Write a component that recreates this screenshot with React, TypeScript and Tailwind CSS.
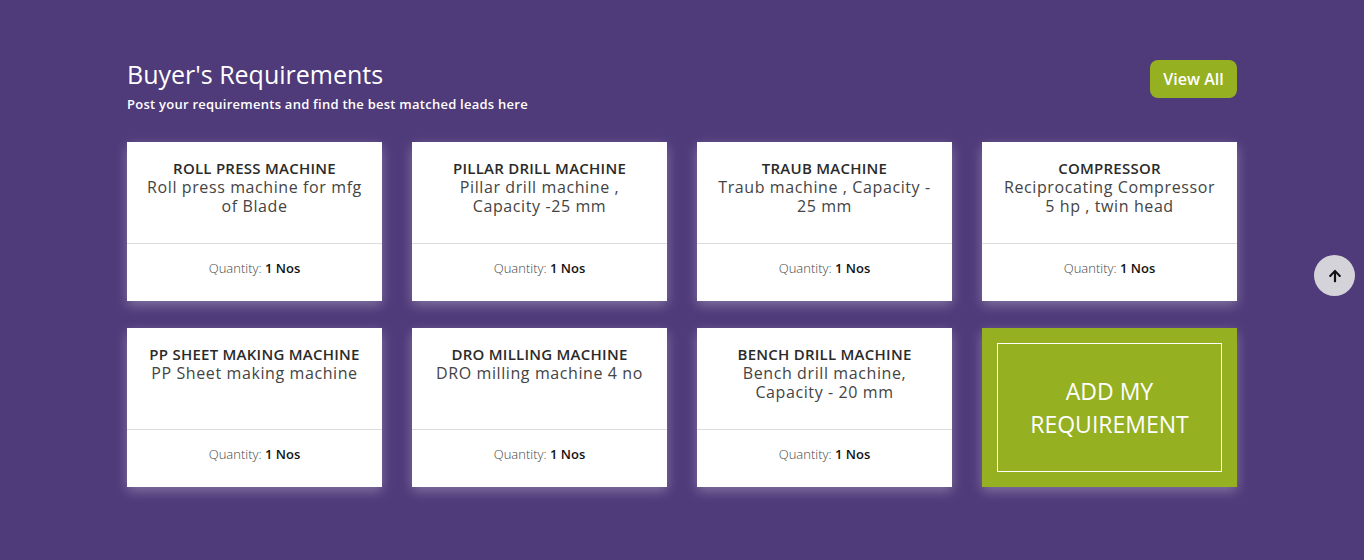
import React from 'react';
import { FaArrowUp } from 'react-icons/fa';

// Buyer's requirements listed on the home page
const requirements = [
  { id: 1, title: 'ROLL PRESS MACHINE', desc: 'Roll press machine for mfg of Blade', qty: '1 Nos' },
  { id: 2, title: 'PILLAR DRILL MACHINE', desc: 'Pillar drill machine , Capacity -25 mm', qty: '1 Nos' },
  { id: 3, title: 'TRAUB MACHINE', desc: 'Traub machine , Capacity - 25 mm', qty: '1 Nos' },
  { id: 4, title: 'COMPRESSOR', desc: 'Reciprocating Compressor 5 hp , twin head', qty: '1 Nos' },
  { id: 5, title: 'PP SHEET MAKING MACHINE', desc: 'PP Sheet making machine', qty: '1 Nos' },
  { id: 6, title: 'DRO MILLING MACHINE', desc: 'DRO milling machine 4 no', qty: '1 Nos' },
  { id: 7, title: 'BENCH DRILL MACHINE', desc: 'Bench drill machine, Capacity - 20 mm', qty: '1 Nos' },
];

const App: React.FC = () => {
  return (
    <div
      className="relative min-h-[560px] bg-[#4f3a7a] pt-[58px] pb-10"
      style={{ fontFamily: '"Open Sans", "Liberation Sans", sans-serif' }}
    >
      <div className="mx-auto w-[1110px]">
        {/* Heading */}
        <div className="flex items-start justify-between">
          <div>
            <h2 className="text-[25px] leading-[32px] font-normal text-white">Buyer's Requirements</h2>
            <p className="mt-[5px] text-[13px] leading-[18px] font-semibold tracking-[0.25px] text-white">
              Post your requirements and find the best matched leads here
            </p>
          </div>
          <button className="mt-[2px] h-[38px] w-[87px] rounded-lg bg-[#95b021] text-[16px] font-semibold text-white">
            View All
          </button>
        </div>

        {/* Cards */}
        <div className="mt-[29px] grid grid-cols-4 gap-x-[30px] gap-y-[27px]">
          {requirements.map((item) => (
            <div
              key={item.id}
              className="flex h-[159px] flex-col bg-white shadow-[0_4px_12px_rgba(255,255,255,0.3)]"
            >
              <div className="h-[102px] border-b border-[#dcdcdc] px-[20px] pt-[17px] text-center">
                <h3 className="text-[15px] leading-[19px] font-semibold tracking-[0.25px] text-[#2a2a2a]">
                  {item.title}
                </h3>
                <p className="text-[16px] leading-[19px] tracking-[0.6px] text-[#444]">{item.desc}</p>
              </div>
              <div className="flex flex-1 items-center justify-center pb-[7px] text-[13px] text-[#444]">
                <span className="font-light">Quantity:&nbsp;</span>
                <span className="font-semibold text-[#111]">{item.qty}</span>
              </div>
            </div>
          ))}
          <div className="h-[159px] bg-[#95b021] p-[15px] shadow-[0_4px_12px_rgba(255,255,255,0.3)]">
            <div className="flex h-full items-center justify-center border border-white text-center">
              <span className="text-[23px] leading-[33px] text-white">
                ADD MY
                <br />
                REQUIREMENT
              </span>
            </div>
          </div>
        </div>
      </div>

      {/* Scroll to top */}
      <button className="absolute top-[255px] right-[9px] flex h-[41px] w-[41px] items-center justify-center rounded-full bg-[#d4d3d9] text-[#111]">
        <FaArrowUp size={14} />
      </button>
    </div>
  );
};

export default App;
